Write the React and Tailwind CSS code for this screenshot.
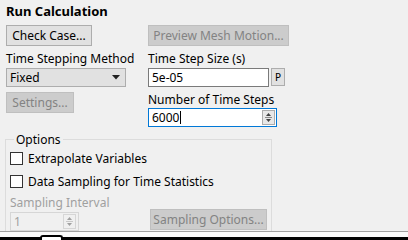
import React from "react";

const Btn = ({ children, disabled, className = "" }) => (
  <div
    className={`flex items-center justify-center border text-[12px] leading-none ${
      disabled
        ? "bg-[#cccccc] border-[#bfbfbf] text-[#838383]"
        : "bg-[#e1e1e1] border-[#adadad] text-black"
    } ${className}`}
  >
    {children}
  </div>
);

const SpinArrows = ({ disabled }) => (
  <div
    className={`flex h-[15px] w-[13px] flex-col items-center justify-center border ${
      disabled ? "border-[#d6d6d6] bg-[#f0f0f0]" : "border-[#acacac] bg-[#e8e8e8]"
    }`}
  >
    <svg width="7" height="11" viewBox="0 0 7 11">
      <path d="M3.5 1 L6 4 L1 4 Z" fill={disabled ? "#a0a0a0" : "#404040"} />
      <line x1="0" y1="5.5" x2="7" y2="5.5" stroke={disabled ? "#c8c8c8" : "#8a8a8a"} />
      <path d="M1 7 L6 7 L3.5 10 Z" fill={disabled ? "#a0a0a0" : "#404040"} />
    </svg>
  </div>
);

const Check = ({ label }) => (
  <div className="flex h-[13px] items-center gap-[5px]">
    <div className="h-[13px] w-[13px] border border-[#333333] bg-white" />
    <span className="text-[12px] leading-none">{label}</span>
  </div>
);

export default function App() {
  return (
    <div
      className="relative h-[240px] w-[408px] overflow-hidden bg-[#f0f0f0] text-black"
      style={{ fontFamily: '"Noto Sans", "DejaVu Sans", sans-serif' }}
    >
      <div className="flex h-[25px] items-start pl-[6px] pt-[3px] text-[13px] font-bold leading-[16px]">
        Run Calculation
      </div>

      <div className="flex pl-[6px]">
        {/* left column */}
        <div className="flex w-[142px] flex-col">
          <Btn className="h-[21px] w-[86px]">Check Case...</Btn>
          <div className="mt-[5px] h-[16px] text-[12px] leading-[16px]">Time Stepping Method</div>
          <div className="mt-[1px] flex h-[19px] w-[120px] items-center justify-between border border-[#adadad] bg-[#e1e1e1] pl-[3px] pr-[5px] text-[12px]">
            <span>Fixed</span>
            <svg width="8" height="5" viewBox="0 0 8 5">
              <path d="M0 0 L8 0 L4 4.5 Z" fill="#202020" />
            </svg>
          </div>
          <Btn disabled className="mt-[5px] h-[21px] w-[68px]">
            Settings...
          </Btn>
        </div>

        {/* right column */}
        <div className="flex flex-col">
          <Btn disabled className="h-[21px] w-[141px]">
            Preview Mesh Motion...
          </Btn>
          <div className="mt-[5px] h-[16px] text-[12px] leading-[16px]">Time Step Size (s)</div>
          <div className="mt-[1px] flex items-start gap-[2px]">
            <div className="flex h-[19px] w-[121px] items-center border border-[#7a7a7a] bg-white pl-[3px] text-[12px]">
              5e-05
            </div>
            <div
              className="flex h-[18px] w-[14px] items-center justify-center border border-[#adadad] bg-[#e1e1e1] text-[10px]"
              style={{ fontFamily: '"DejaVu Sans Mono", monospace' }}
            >
              P
            </div>
          </div>
          <div className="mt-[5px] h-[16px] text-[12px] leading-[16px]">Number of Time Steps</div>
          <div className="flex h-[19px] w-[129px] items-center justify-between border border-[#0078d7] bg-white pl-[3px] pr-[1px] text-[12px]">
            <span className="flex items-center">
              6000
              <span className="ml-[1px] inline-block h-[13px] w-[1px] bg-black" />
            </span>
            <SpinArrows />
          </div>
        </div>
      </div>

      {/* Options group */}
      <div className="relative ml-[5px] mt-[12px] h-[100px] w-[267px] border border-b-0 border-[#dcdcdc]">
        <div className="absolute -top-[8px] left-[8px] bg-[#f0f0f0] px-[2px] text-[12px] leading-[15px]">
          Options
        </div>
        <div className="flex flex-col pl-[4px] pt-[12px]">
          <Check label="Extrapolate Variables" />
          <div className="mt-[10px]">
            <Check label="Data Sampling for Time Statistics" />
          </div>
          <div className="flex items-end justify-between pr-[4px]">
            <div className="flex flex-col">
              <div className="mt-[7px] h-[16px] text-[12px] leading-[16px] text-[#a0a0a0]">
                Sampling Interval
              </div>
              <div className="mt-[1px] flex h-[19px] w-[69px] items-center justify-between border border-[#d6d6d6] bg-[#f0f0f0] pl-[3px] pr-[2px] text-[12px] text-[#a0a0a0]">
                <span>1</span>
                <SpinArrows disabled />
              </div>
            </div>
            <Btn disabled className="mb-[1px] h-[21px] w-[117px]">
              Sampling Options...
            </Btn>
          </div>
        </div>
      </div>

      {/* bottom edge */}
      <div className="absolute left-0 top-[231px] h-[1px] w-full bg-[#a0a0a0]" />
      <div className="absolute left-0 top-[232px] h-[5px] w-full bg-[#f9f9f9]" />
      <div className="absolute left-0 top-[237px] h-[3px] w-full bg-black" />
      <div className="absolute left-[40px] top-[235px] h-[6px] w-[23px] rounded-t-[3px] border-2 border-b-0 border-black bg-white" />
    </div>
  );
}
